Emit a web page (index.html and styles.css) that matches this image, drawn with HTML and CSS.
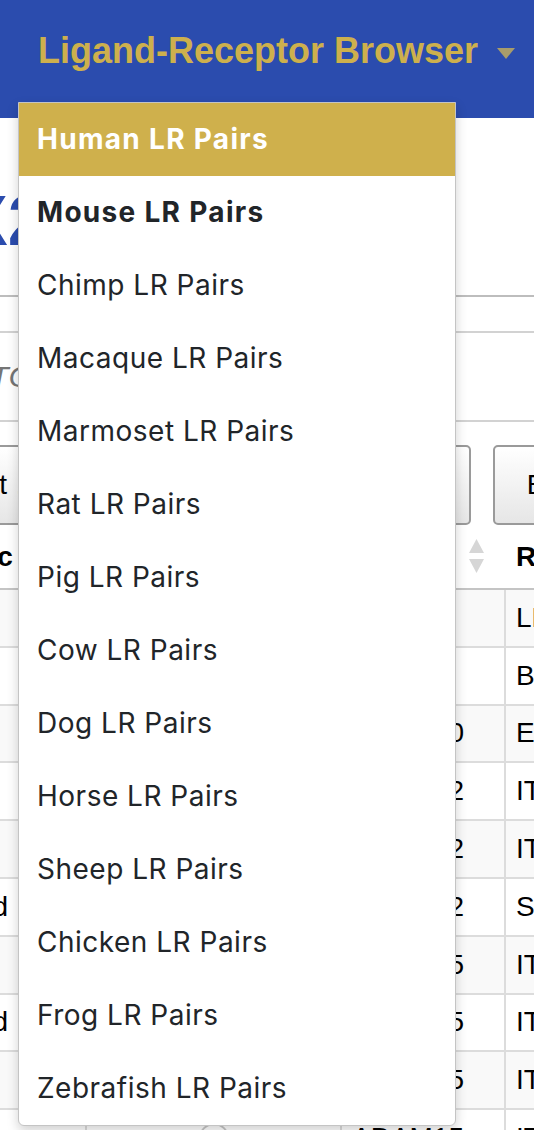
FILE: index.html
```html
<!DOCTYPE html>
<html lang="en">
<head>
<meta charset="utf-8">
<title>Ligand-Receptor Browser</title>
<link rel="stylesheet" href="styles.css">
</head>
<body>
<nav class="navbar">
  <div class="nav-item">
    <a class="nav-link" href="#">Ligand-Receptor Browser<span class="caret"></span></a>
    <div class="dropdown-menu">
      <a class="dropdown-item active" href="#">Human LR Pairs</a>
      <a class="dropdown-item current" href="#">Mouse LR Pairs</a>
      <a class="dropdown-item" href="#">Chimp LR Pairs</a>
      <a class="dropdown-item" href="#">Macaque LR Pairs</a>
      <a class="dropdown-item" href="#">Marmoset LR Pairs</a>
      <a class="dropdown-item" href="#">Rat LR Pairs</a>
      <a class="dropdown-item" href="#">Pig LR Pairs</a>
      <a class="dropdown-item" href="#">Cow LR Pairs</a>
      <a class="dropdown-item" href="#">Dog LR Pairs</a>
      <a class="dropdown-item" href="#">Horse LR Pairs</a>
      <a class="dropdown-item" href="#">Sheep LR Pairs</a>
      <a class="dropdown-item" href="#">Chicken LR Pairs</a>
      <a class="dropdown-item" href="#">Frog LR Pairs</a>
      <a class="dropdown-item" href="#">Zebrafish LR Pairs</a>
    </div>
  </div>
</nav>

<main class="page">
  <h1 class="title">X2</h1>
  <div class="divider"></div>
  <div class="search"><span class="placeholder">e.g. TGFB1</span></div>
  <div class="buttons">
    <button class="btn">Export …</button>
    <button class="btn btn-wide">Column visibility</button>
    <button class="btn">Excel</button>
  </div>
  <div class="table">
    <div class="thead">
      <div class="th">Dynamic</div>
      <div class="th">Pair</div>
      <div class="th th-sort">Ligand
        <svg class="sort" width="15" height="35" viewBox="0 0 15 35"><polygon points="7.5,0 15,14 0,14"/><polygon points="0,20 15,20 7.5,34"/></svg>
      </div>
      <div class="th">Receptor</div>
    </div>
    <div class="tr"><div class="td">Contact</div><div class="td td-c"><span class="dot"></span></div><div class="td">A2M</div><div class="td">LRP1</div></div>
    <div class="tr"><div class="td">Contact</div><div class="td td-c"><span class="dot"></span></div><div class="td">ACE</div><div class="td">BDKRB2</div></div>
    <div class="tr"><div class="td">Contact</div><div class="td td-c"><span class="dot"></span></div><div class="td">ADAM10</div><div class="td">EPHA3</div></div>
    <div class="tr"><div class="td">Contact</div><div class="td td-c"><span class="dot"></span></div><div class="td">ADAM12</div><div class="td">ITGA9</div></div>
    <div class="tr"><div class="td">Contact</div><div class="td td-c"><span class="dot"></span></div><div class="td">ADAM12</div><div class="td">ITGB1</div></div>
    <div class="tr"><div class="td">Secreted</div><div class="td td-c"><span class="dot"></span></div><div class="td">ADAM12</div><div class="td">SDC4</div></div>
    <div class="tr"><div class="td">Contact</div><div class="td td-c"><span class="dot"></span></div><div class="td">ADAM15</div><div class="td">ITGA5</div></div>
    <div class="tr"><div class="td">Secreted</div><div class="td td-c"><span class="dot"></span></div><div class="td">ADAM15</div><div class="td">ITGA9</div></div>
    <div class="tr"><div class="td">Contact</div><div class="td td-c"><span class="dot"></span></div><div class="td">ADAM15</div><div class="td">ITGAV</div></div>
    <div class="tr"><div class="td">Contact</div><div class="td td-c"><span class="dot"></span></div><div class="td">ADAM15</div><div class="td">ITGB1</div></div>
  </div>
</main>
</body>
</html>
```

FILE: styles.css
```css
html, body {
  margin: 0;
  padding: 0;
  overflow: hidden;
}
body {
  width: 534px;
  height: 1130px;
  background: #fff;
  color: #000;
  font-family: "Liberation Sans", Arial, sans-serif;
}

/* navbar */
.navbar {
  position: relative;
  z-index: 10;
  height: 118px;
  box-sizing: border-box;
  padding-left: 18px;
  background: #2b4cae;
}
.nav-item {
  position: relative;
  display: inline-block;
  padding-top: 31px;
}
.nav-link {
  display: block;
  padding: 0 20px;
  font-size: 36px;
  line-height: 40px;
  font-weight: 700;
  color: #cdb04d;
  text-decoration: none;
  white-space: nowrap;
}
.caret {
  display: inline-block;
  width: 0;
  height: 0;
  margin-left: 19px;
  border-top: 11px solid #a89c6b;
  border-left: 9.5px solid transparent;
  border-right: 9.5px solid transparent;
  vertical-align: 4px;
}
.dropdown-menu {
  position: absolute;
  top: 102px;
  left: 0;
  width: 438px;
  box-sizing: border-box;
  background: #fff;
  border: 1px solid #c4c4c4;
  border-radius: 0 0 6px 6px;
  box-shadow: 0 5px 12px rgba(0, 0, 0, 0.18);
  font-family: Inter, "Noto Sans", sans-serif;
}
.dropdown-item {
  display: block;
  padding: 0 18px;
  line-height: 73px;
  font-size: 28px;
  letter-spacing: 0.5px;
  color: #212529;
  text-decoration: none;
  white-space: nowrap;
}
.dropdown-item.active {
  background: #cfb04c;
  color: #fff;
  font-weight: 700;
  letter-spacing: 1.3px;
}
.dropdown-item.current {
  font-weight: 700;
  letter-spacing: 1.3px;
}

/* page (scrolled horizontally) */
.page {
  width: 900px;
  margin-left: -114px;
}
.title {
  margin: 68px 0 0 75px;
  font-size: 70px;
  line-height: 70px;
  font-weight: 700;
  color: #2b4cae;
}
.divider {
  margin-top: 39px;
  height: 2px;
  background: #bdbdbd;
}
.search {
  display: flex;
  align-items: center;
  height: 91px;
  box-sizing: border-box;
  margin-top: 34px;
  padding-left: 46px;
  border-top: 2px solid #d2d2d2;
  border-bottom: 2px solid #d2d2d2;
}
.placeholder {
  font-size: 30px;
  font-style: italic;
  color: #757575;
}
.buttons {
  display: flex;
  gap: 22px;
  margin-top: 23px;
  padding-left: 6px;
}
.btn {
  display: flex;
  align-items: center;
  height: 80px;
  box-sizing: border-box;
  padding: 0 32px;
  border: 2px solid #9a9a9a;
  border-radius: 5px;
  background: linear-gradient(#ffffff, #e6e6e6);
  font-family: inherit;
  font-size: 28px;
  color: #000;
  white-space: nowrap;
}
.btn-wide {
  width: 372px;
}

/* table */
.table {
  font-size: 28px;
}
.thead,
.tr {
  display: grid;
  grid-template-columns: 201px 255px 164px 280px;
}
.thead {
  height: 65px;
  box-sizing: border-box;
  border-bottom: 2px solid #c4c4c4;
}
.th {
  display: flex;
  align-items: center;
  justify-content: space-between;
  padding: 0 10px;
  font-weight: 700;
  white-space: nowrap;
}
.th-sort {
  padding-right: 22px;
}
.sort {
  fill: #d6d6d6;
}
.tr {
  height: 57.8px;
  box-sizing: border-box;
}
.tr:nth-child(even) {
  background: #f9f9f9;
}
.td {
  display: flex;
  align-items: center;
  padding: 0 10px;
  border-right: 2px solid #dcdcdc;
  border-bottom: 2px solid #dcdcdc;
  white-space: nowrap;
  overflow: hidden;
}
.td-c {
  justify-content: center;
}
.dot {
  width: 30px;
  height: 30px;
  box-sizing: border-box;
  border: 2px solid #c8c8c8;
  border-radius: 50%;
  background: #fff;
}
```
